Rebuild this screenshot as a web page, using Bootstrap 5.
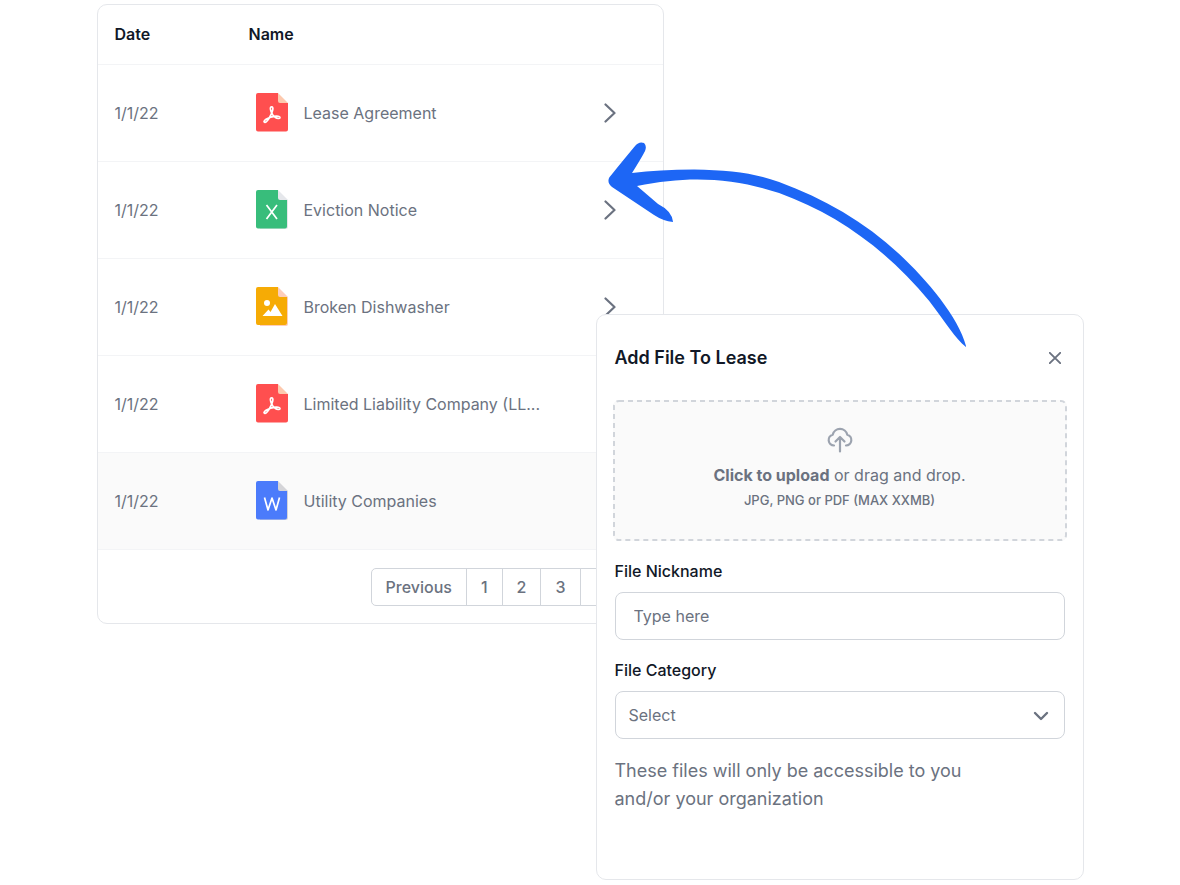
<!DOCTYPE html>
<html lang="en">
<head>
<meta charset="utf-8">
<meta name="viewport" content="width=device-width, initial-scale=1">
<title>Lease files</title>
<link href="https://cdn.jsdelivr.net/npm/bootstrap@5.3.0/dist/css/bootstrap.min.css" rel="stylesheet">
<style>
  :root { --ink: #111827; --muted: #6b7280; --line: #d1d5db; --edge: #e5e7eb; }
  body { font-family: Inter, "Liberation Sans", sans-serif; color: var(--muted); background: #fff; }
  .scene { display: grid; grid-template-columns: 499fr 68fr 420fr; max-width: 987px; padding-top: 4px; }
  .panel { background: #fff; border: 1px solid var(--edge); border-radius: 10px; }
  .files-panel { grid-area: 1 / 1 / 2 / 3; }
  .upload-panel { grid-area: 1 / 2 / 2 / 4; margin-top: 310px; padding: 26px 18px 66px; z-index: 1; }
  .swoosh { left: 51.8%; top: 142px; width: 36.3%; z-index: 2; pointer-events: none; }

  .files { table-layout: fixed; color: var(--muted); --bs-table-color: var(--muted); --bs-table-bg: transparent; }
  .files > :not(caption) > * > * { padding: 0 17px; border-color: #f3f4f6; vertical-align: middle; }
  .files th { height: 59px; color: var(--ink); font-weight: 600; }
  .files td { height: 97px; }
  .files .date-col { width: 134px; }
  .files .open-col { width: 76px; }
  .files .current { background: #fafafa; }
  .file-name { gap: 16px; padding-left: 7px; white-space: nowrap; }
  .open-btn { color: var(--muted); }

  .pagination { --bs-pagination-color: var(--muted); --bs-pagination-border-color: var(--line); --bs-pagination-padding-x: 14px; --bs-pagination-padding-y: 6px; --bs-pagination-border-radius: 5px; font-weight: 500; }
  .pager { padding: 18px 17px 17px; }
  .page-next { width: 66px; height: 100%; }

  .panel-title { font-size: 18px; line-height: 34px; font-weight: 600; color: var(--ink); }
  .drop { gap: 0; margin: 25px -2px 0; padding: 26px 0 28px; background: #fafafa; border: 0; border-radius: 6px; color: var(--muted); line-height: 25px; }
  .drop-outline { x: 1px; y: 1px; width: calc(100% - 2px); height: calc(100% - 2px); }
  .drop-icon { margin-bottom: 9px; }
  .drop-hint { font-size: 13px; font-weight: 500; }
  .field-group { margin-top: 18px; }
  .field-label { color: var(--ink); font-weight: 500; line-height: 24px; margin-bottom: 9px; }
  .field { height: 48px; border-color: var(--line); border-radius: 8px; color: var(--muted); }
  .field::placeholder { color: var(--muted); }
  .field-text { padding: 0 18px; }
  .field-select { padding: 0 40px 0 13px; background-image: none; }
  .caret { right: 16px; top: 20px; pointer-events: none; }
  .note { font-size: 18px; line-height: 28px; margin-top: 18px; }
</style>
</head>
<body>
<svg class="d-none" aria-hidden="true">
  <symbol id="acrobat" viewBox="0 0 32 39">
    <path fill="#fdc9ae" d="M22 0l10 10v4H20z"/>
    <path fill="#ff4f4f" d="M2 0h20v8a2 2 0 0 0 2 2h8v26.500a2 2 0 0 1-2 2H2a2 2 0 0 1-2-2V2a2 2 0 0 1 2-2z"/>
    <path fill="none" stroke="#fff" stroke-width="1.700" stroke-linejoin="round" d="M15 14c1.500-.8 2.300.8 1.700 3-.5 2.300-1.400 4.500-2.900 7-1.700 3-3.700 5.500-5 5.400-1.400-.2-.8-2 1.200-3.200 2.600-1.500 6.600-2.700 10-3 2.400-.2 4.300.4 4 1.500-.4 1.300-2.900.9-4.600-.2-1.900-1.300-3.300-3.300-4.200-5.500-.8-2.200-1.200-4.400-.2-5z"/>
  </symbol>
  <symbol id="chevron" viewBox="0 0 12 20"><path d="M1.500 1.500L10.500 10l-9 8.500" fill="none" stroke="currentColor" stroke-width="2.200" stroke-linecap="round" stroke-linejoin="round"/></symbol>
</svg>

<main class="scene position-relative mx-auto">
  <section class="panel files-panel align-self-start" aria-label="Lease files">
    <table class="table files mb-0">
      <thead>
        <tr><th class="date-col" scope="col">Date</th><th scope="col">Name</th><td class="open-col h-auto"></td></tr>
      </thead>
      <tbody>
        <tr>
          <td>1/1/22</td>
          <td><div class="file-name d-flex align-items-center"><svg class="flex-shrink-0" width="32" height="39"><use href="#acrobat"/></svg>Lease Agreement</div></td>
          <td><button class="btn p-0 border-0 open-btn d-flex" type="button" aria-label="Open"><svg width="12" height="20"><use href="#chevron"/></svg></button></td>
        </tr>
        <tr>
          <td>1/1/22</td>
          <td><div class="file-name d-flex align-items-center"><svg class="flex-shrink-0" width="32" height="39" viewBox="0 0 32 39"><path fill="#e5e7eb" d="M22 0l10 10v27a2 2 0 0 1-2 2H4V14z"/><path fill="#38bd7b" d="M2 0h20v8a2 2 0 0 0 2 2h7v26.500a2 2 0 0 1-2 2H2a2 2 0 0 1-2-2V2a2 2 0 0 1 2-2z"/><path d="M10.500 15l10.500 14M21 15L10.500 29" fill="none" stroke="#fff" stroke-width="1.700"/></svg>Eviction Notice</div></td>
          <td><button class="btn p-0 border-0 open-btn d-flex" type="button" aria-label="Open"><svg width="12" height="20"><use href="#chevron"/></svg></button></td>
        </tr>
        <tr>
          <td>1/1/22</td>
          <td><div class="file-name d-flex align-items-center"><svg class="flex-shrink-0" width="32" height="39" viewBox="0 0 32 39"><path fill="#fdcdbb" d="M22 0l10 10v27a2 2 0 0 1-2 2H4V14z"/><path fill="#f6ab05" d="M2 0h20v8a2 2 0 0 0 2 2h7v26a2 2 0 0 1-2 2H2a2 2 0 0 1-2-2V2a2 2 0 0 1 2-2z"/><circle cx="11" cy="16" r="3" fill="#fff"/><path fill="#fff" d="M6.500 29L12.500 22.500l2 2.500L19 17l7.500 12z"/></svg>Broken Dishwasher</div></td>
          <td><button class="btn p-0 border-0 open-btn d-flex" type="button" aria-label="Open"><svg width="12" height="20"><use href="#chevron"/></svg></button></td>
        </tr>
        <tr>
          <td>1/1/22</td>
          <td><div class="file-name d-flex align-items-center"><svg class="flex-shrink-0" width="32" height="39"><use href="#acrobat"/></svg>Limited Liability Company (LL...</div></td>
          <td></td>
        </tr>
        <tr class="current">
          <td>1/1/22</td>
          <td><div class="file-name d-flex align-items-center"><svg class="flex-shrink-0" width="32" height="39" viewBox="0 0 32 39"><path fill="#d4d4d8" d="M22 0l10 10v27a2 2 0 0 1-2 2H4V14z"/><path fill="#4b7bfb" d="M2 0h20v8a2 2 0 0 0 2 2h7v26.500a2 2 0 0 1-2 2H2a2 2 0 0 1-2-2V2a2 2 0 0 1 2-2z"/><path d="M8.500 16.500L12 29l4-12 4 12 3.500-12.500" fill="none" stroke="#fff" stroke-width="1.700" stroke-linejoin="round"/></svg>Utility Companies</div></td>
          <td></td>
        </tr>
      </tbody>
    </table>
    <nav class="pager d-flex justify-content-end" aria-label="Pages">
      <ul class="pagination mb-0">
        <li class="page-item"><a class="page-link" href="#">Previous</a></li>
        <li class="page-item"><a class="page-link" href="#">1</a></li>
        <li class="page-item"><a class="page-link" href="#">2</a></li>
        <li class="page-item"><a class="page-link" href="#">3</a></li>
        <li class="page-item"><span class="page-link page-next"></span></li>
      </ul>
    </nav>
  </section>

  <form class="panel upload-panel">
    <div class="d-flex justify-content-between align-items-center">
      <h2 class="panel-title mb-0">Add File To Lease</h2>
      <button class="btn p-0 border-0 open-btn d-flex me-1" type="button" aria-label="Close"><svg width="12" height="12" viewBox="0 0 12 12"><path d="M.8.800l10.400 10.400M11.200.800L.8 11.200" stroke="currentColor" stroke-width="1.900" stroke-linecap="round"/></svg></button>
    </div>
    <div class="d-grid">
      <button class="drop position-relative d-flex flex-column align-items-center" type="button">
        <svg class="position-absolute top-0 start-0 w-100 h-100" aria-hidden="true"><rect class="drop-outline" rx="5" fill="none" stroke="#d1d5db" stroke-width="2" stroke-dasharray="5 4"/></svg>
        <svg class="drop-icon" width="26" height="28" viewBox="0 0 26 28" fill="none" stroke="#9ca3af" stroke-width="2.200" stroke-linecap="round" stroke-linejoin="round"><path d="M7 19.500a5.500 5.500 0 0 1-1.300-10.800 7.500 7.500 0 0 1 14.600 0A5.500 5.500 0 0 1 19 19.500M13 25.500V11.500M8.500 15.500l4.500-4.500 4.500 4.500"/></svg>
        <span><span class="fw-bold">Click to upload</span> or drag and drop.</span>
        <span class="drop-hint">JPG, PNG or PDF (MAX XXMB)</span>
      </button>
    </div>
    <div class="field-group">
      <label class="field-label d-block" for="nickname">File Nickname</label>
      <input class="form-control field field-text" id="nickname" type="text" placeholder="Type here">
    </div>
    <div class="field-group">
      <label class="field-label d-block" for="category">File Category</label>
      <div class="position-relative">
        <select class="form-select field field-select" id="category"><option>Select</option></select>
        <svg class="caret position-absolute" width="16" height="10" viewBox="0 0 16 10"><path d="M2 2l6 6 6-6" fill="none" stroke="#6b7280" stroke-width="2.400" stroke-linecap="round" stroke-linejoin="round"/></svg>
      </div>
    </div>
    <p class="note mb-0">These files will only be accessible to you<br>and/or your organization</p>
  </form>

  <svg class="swoosh position-absolute" viewBox="609 142 358 206" aria-hidden="true">
    <path fill="#1d66f5" d="M610 178Q612 175 636 146Q640 141 645 143Q648 146 646 151Q643 157 633 173Q660 169.500 695 169.500C730 170 755 173 780 182C824 198 866 222 900 254C928 280 960 318 967 347C956 339 947 323 930 301C888 250 838 214 780 193C735 178 690 175 638 186L659 204Q673 211 674 222Q664 221 655 215L613 187Q608 183 610 178Z"/>
  </svg>
</main>
<script src="https://cdn.jsdelivr.net/npm/bootstrap@5.3.0/dist/js/bootstrap.bundle.min.js"></script>
</body>
</html>
